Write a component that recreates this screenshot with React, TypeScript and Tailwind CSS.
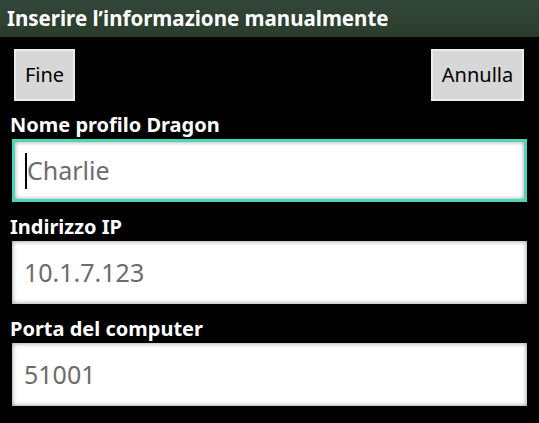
const FONT = "font-['Noto_Sans','Open_Sans',sans-serif]";

const fields = [
  { label: "Nome profilo Dragon", value: "Charlie", focused: true },
  { label: "Indirizzo IP", value: "10.1.7.123", focused: false },
  { label: "Porta del computer", value: "51001", focused: false }
];

function Field({ label, value, focused }: { label: string; value: string; focused: boolean }) {
  return (
    <div className="flex flex-col">
      <div className="flex h-[38px] items-end pb-[4px] pl-[10px] text-[20px] font-bold leading-none text-white">
        {label}
      </div>
      <div
        className={
          focused
            ? "mx-[12px] flex h-[63px] items-center border-[3px] border-[#4dd6b6] bg-white pl-[10px] shadow-[inset_0_0_4px_#9a9a9a]"
            : "mx-[12px] flex h-[63px] items-center bg-white pl-[12px] shadow-[inset_0_0_5px_#8a8a8a]"
        }
      >
        {focused ? <span className="h-[36px] w-[2px] bg-black" /> : null}
        <span className="text-[25px] leading-none text-[#6c6c6c]">{value}</span>
      </div>
    </div>
  );
}

export default function App() {
  return (
    <div className={`h-[423px] w-[539px] overflow-hidden bg-black ${FONT}`}>
      <div className="flex h-[37px] items-center bg-[linear-gradient(180deg,#33473a_0%,#2a3c2b_100%)] pl-[7px] text-[20.5px] font-bold text-white">
        Inserire l’informazione manualmente
      </div>
      <div className="flex items-center justify-between pl-[14px] pr-[15px] pt-[12px]">
        <button className="flex h-[52px] w-[61px] items-center justify-center border-2 border-[#ececec] bg-[#d7d7d7] text-[20px] text-black">
          Fine
        </button>
        <button className="flex h-[52px] w-[93px] items-center justify-center border-2 border-[#ececec] bg-[#d7d7d7] text-[20px] text-black">
          Annulla
        </button>
      </div>
      <div className="flex flex-col gap-[1px]">
        {fields.map((f) => (
          <Field key={f.label} {...f} />
        ))}
      </div>
    </div>
  );
}
